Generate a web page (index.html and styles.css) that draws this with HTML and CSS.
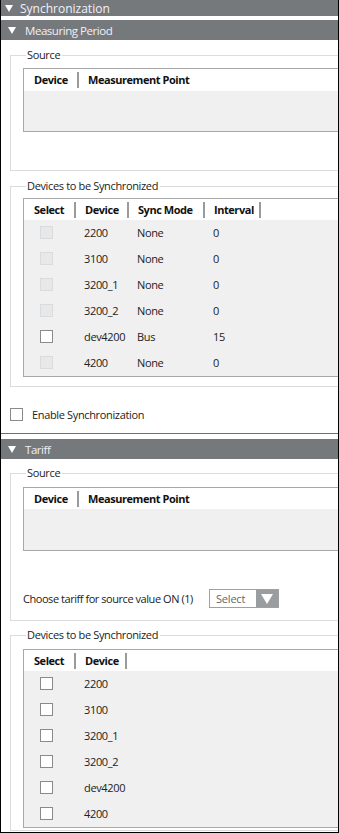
FILE: index.html
```html
<!DOCTYPE html>
<html lang="en">
<head>
  <meta charset="UTF-8">
  <title>Synchronization</title>
  <link rel="stylesheet" href="styles.css">
</head>
<body>
<div class="frame">

  <div class="bar bar-top"><span class="tri"></span>Synchronization</div>

  <div class="bar bar-section"><span class="tri"></span>Measuring Period</div>

  <fieldset class="group group-source">
    <legend>Source</legend>
    <div class="grid">
      <div class="grid-head">
        <div class="col c-dev-src">Device</div>
        <div class="col">Measurement Point</div>
      </div>
      <div class="grid-body empty"></div>
    </div>
  </fieldset>

  <fieldset class="group group-devices">
    <legend>Devices to be Synchronized</legend>
    <div class="grid">
      <div class="grid-head">
        <div class="col c-sel">Select</div>
        <div class="col c-dev">Device</div>
        <div class="col c-mode">Sync Mode</div>
        <div class="col c-int">Interval</div>
      </div>
      <div class="grid-body">
        <div class="row"><div class="c-sel"><span class="box off"></span></div><div class="c-dev">2200</div><div class="c-mode">None</div><div class="c-int">0</div></div>
        <div class="row"><div class="c-sel"><span class="box off"></span></div><div class="c-dev">3100</div><div class="c-mode">None</div><div class="c-int">0</div></div>
        <div class="row"><div class="c-sel"><span class="box off"></span></div><div class="c-dev">3200_1</div><div class="c-mode">None</div><div class="c-int">0</div></div>
        <div class="row"><div class="c-sel"><span class="box off"></span></div><div class="c-dev">3200_2</div><div class="c-mode">None</div><div class="c-int">0</div></div>
        <div class="row"><div class="c-sel"><span class="box"></span></div><div class="c-dev">dev4200</div><div class="c-mode">Bus</div><div class="c-int">15</div></div>
        <div class="row"><div class="c-sel"><span class="box off"></span></div><div class="c-dev">4200</div><div class="c-mode">None</div><div class="c-int">0</div></div>
      </div>
    </div>
  </fieldset>

  <label class="enable"><span class="box"></span>Enable Synchronization</label>

  <div class="divider"></div>

  <div class="bar bar-section"><span class="tri"></span>Tariff</div>

  <fieldset class="group group-tariff">
    <legend>Source</legend>
    <div class="grid">
      <div class="grid-head">
        <div class="col c-dev-src">Device</div>
        <div class="col">Measurement Point</div>
      </div>
      <div class="grid-body empty tall"></div>
    </div>
    <div class="choose">
      <span class="choose-label">Choose tariff for source value ON (1)</span>
      <div class="select">
        <span class="select-text">Select</span>
        <span class="select-btn"><span class="tri"></span></span>
      </div>
    </div>
  </fieldset>

  <fieldset class="group group-devices2">
    <legend>Devices to be Synchronized</legend>
    <div class="grid">
      <div class="grid-head">
        <div class="col c-sel">Select</div>
        <div class="col c-dev last">Device</div>
      </div>
      <div class="grid-body">
        <div class="row"><div class="c-sel"><span class="box"></span></div><div class="c-dev">2200</div></div>
        <div class="row"><div class="c-sel"><span class="box"></span></div><div class="c-dev">3100</div></div>
        <div class="row"><div class="c-sel"><span class="box"></span></div><div class="c-dev">3200_1</div></div>
        <div class="row"><div class="c-sel"><span class="box"></span></div><div class="c-dev">3200_2</div></div>
        <div class="row"><div class="c-sel"><span class="box"></span></div><div class="c-dev">dev4200</div></div>
        <div class="row"><div class="c-sel"><span class="box"></span></div><div class="c-dev">4200</div></div>
      </div>
    </div>
  </fieldset>

</div>
</body>
</html>
```

FILE: styles.css
```css
* {
  box-sizing: border-box;
}

body {
  margin: 0;
  font-family: "Open Sans", "Noto Sans", sans-serif;
  font-size: 11px;
  letter-spacing: -0.35px;
  color: #222;
  background: #fff;
}

.frame {
  width: 339px;
  height: 833px;
  border-left: 1px solid #000;
  border-right: 1px solid #000;
  border-bottom: 1px solid #000;
  overflow: hidden;
}

/* header bars */
.bar {
  display: flex;
  align-items: center;
  background: #75797c;
  color: #f2f0f8;
  white-space: nowrap;
}

.bar-top {
  height: 16px;
  padding-left: 4px;
  margin-bottom: 4px;
  font-size: 12px;
  letter-spacing: 0;
}

.bar-section {
  height: 20px;
  padding-left: 7px;
  font-size: 11.5px;
  letter-spacing: -0.45px;
}

.bar .tri {
  width: 0;
  height: 0;
  border-left: 4px solid transparent;
  border-right: 4px solid transparent;
  border-top: 7px solid #fff;
  margin-right: 9px;
}

.bar-top .tri {
  margin-right: 7px;
}

.divider {
  height: 1px;
  margin: 12px 0 5px;
  background: #707070;
}

/* group boxes */
.group {
  margin: 0 -30px 0 9px;
  padding: 0 0 0 12px;
  border: 1px solid #dcdcdc;
  min-width: 0;
}

.group legend {
  padding: 0 2px 0 1px;
  margin-left: 3px;
  line-height: 14px;
  white-space: nowrap;
}

.group-source {
  margin-top: 8px;
  padding-top: 6px;
  padding-bottom: 38px;
}

.group-devices {
  margin-top: 8px;
  padding-top: 5px;
  padding-bottom: 9px;
}

.group-tariff {
  margin-top: 7px;
  padding-top: 7px;
  padding-bottom: 12px;
}

.group-devices2 {
  margin-top: 7px;
  padding-top: 7px;
  padding-bottom: 2px;
}

/* grids */
.grid {
  border: 1px solid #a8a8a8;
  border-right: none;
  background: #f0f0f0;
}

.grid-head {
  display: flex;
  height: 21px;
  align-items: center;
  background: #fff;
  font-weight: bold;
  letter-spacing: -0.45px;
  color: #111;
}

.group-source .grid-head {
  height: 22px;
}

.grid-head .col {
  height: 16px;
  line-height: 16px;
  padding-left: 10px;
  white-space: nowrap;
}

.grid-head .col + .col {
  border-left: 2px solid #9a9a9a;
  padding-left: 9px;
}

.grid-head .c-dev-src { width: 53px; }
.grid-head .c-sel { width: 50px; }
.grid-head .c-dev { width: 53px; }
.grid-head .c-mode { width: 76px; }
.grid-head .c-int { width: 58px; }

.grid-head .c-int,
.grid-head .last {
  border-right: 2px solid #9a9a9a;
}

.grid-body.empty {
  height: 40px;
}

.grid-body.tall {
  height: 41px;
}

.row {
  display: flex;
  align-items: center;
  height: 26px;
  padding-bottom: 1px;
  color: #222;
}

.row .c-sel {
  width: 50px;
  padding-left: 16px;
  display: flex;
  align-items: center;
}

.row .c-dev { width: 53px; padding-left: 10px; }
.row .c-mode { width: 76px; padding-left: 10px; }
.row .c-int { width: 58px; padding-left: 10px; }

/* checkboxes */
.box {
  display: inline-block;
  flex: none;
  width: 13px;
  height: 13px;
  border: 1px solid #8a8a8a;
  background: #fff;
}

.box.off {
  border-color: #d8dcdf;
  background: #e8e8e8;
}

.enable {
  display: flex;
  align-items: center;
  height: 13px;
  margin: 21px 0 0 9px;
  white-space: nowrap;
}

.enable .box {
  margin-right: 9px;
}

/* tariff choose row */
.choose {
  display: flex;
  align-items: center;
  margin-top: 38px;
  white-space: nowrap;
}

.choose-label {
  width: 177px;
  letter-spacing: -0.45px;
}

.select {
  display: flex;
  width: 70px;
  height: 19px;
  margin-left: 9px;
  border: 1px solid #a0a0a0;
  background: #fff;
  letter-spacing: -0.2px;
}

.select-text {
  flex: 1;
  padding-left: 6px;
  line-height: 17px;
  color: #666;
}

.select-btn {
  width: 22px;
  background: #9a9da0;
  display: flex;
  align-items: center;
  justify-content: center;
}

.select-btn .tri {
  width: 0;
  height: 0;
  border-left: 6px solid transparent;
  border-right: 6px solid transparent;
  border-top: 10px solid #fff;
}
```
